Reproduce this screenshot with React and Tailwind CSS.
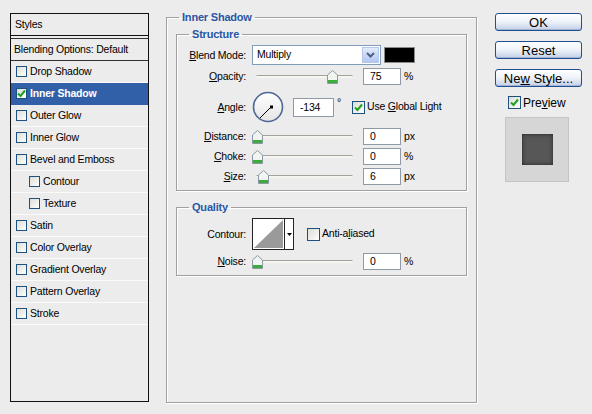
import React from 'react';

const font = { fontFamily: '"Liberation Sans", Arial, sans-serif' };

/* ── XP-style checkbox ── */
function Check({ checked, small }) {
    return (
        <span
            className={
                (small ? 'w-[11px] h-[11px] ' : 'w-[13px] h-[13px] ') +
                'inline-flex shrink-0 items-center justify-center border border-[#1c5180] bg-gradient-to-br from-[#dcdcd7] to-white'
            }
        >
            {checked && (
                <svg width="9" height="9" viewBox="0 0 9 9">
                    <path d="M1 4.5 L3.5 7 L8 1.5" fill="none" stroke="#21a121" strokeWidth="2" />
                </svg>
            )}
        </span>
    );
}

function Thumb() {
    return (
        <svg width="11" height="14" viewBox="0 0 11 14">
            <path d="M5.5 0.5 L10.5 5 V13.5 H0.5 V5 Z" fill="#f2f4f2" stroke="#8a98a4" />
            <rect x="1" y="10" width="9" height="3" fill="#3cad3c" />
        </svg>
    );
}

function Slider({ value }) {
    return (
        <div className="relative w-[97px] h-[14px]">
            <div className="absolute left-0 right-0 top-[6px] h-[3px] rounded-full border-t border-[#a4a49c] bg-[#f6f6f0]" />
            <div className="absolute top-[1px]" style={{ left: value - 4 }}>
                <Thumb />
            </div>
        </div>
    );
}

function Field({ value, wide }) {
    return (
        <div
            className={
                (wide ? 'w-[41px] h-[19px] ' : 'w-[38px] h-[17px] ') +
                'flex items-center bg-white border border-[#8e9aa6] pl-[6px] text-[10.5px] leading-none'
            }
        >
            {value}
        </div>
    );
}

function Label({ children }) {
    return <div className="w-[69px] shrink-0 text-right text-[10.5px] leading-none">{children}</div>;
}

function SliderRow({ label, value, unit }) {
    return (
        <div className="flex h-[20px] items-center">
            <Label>{label}</Label>
            <div className="ml-[10px]">
                <Slider value={value} />
            </div>
            <div className="ml-[10px]">
                <Field value={value} />
            </div>
            <span className="ml-[3px] text-[10.5px] leading-none">{unit}</span>
        </div>
    );
}

const styleRows = [
    { name: 'Drop Shadow' },
    { name: 'Inner Shadow', on: true },
    { name: 'Outer Glow' },
    { name: 'Inner Glow' },
    { name: 'Bevel and Emboss' },
    { name: 'Contour', sub: true },
    { name: 'Texture', sub: true },
    { name: 'Satin' },
    { name: 'Color Overlay' },
    { name: 'Gradient Overlay' },
    { name: 'Pattern Overlay' },
    { name: 'Stroke' },
];

function XpButton({ children }) {
    return (
        <button
            type="button"
            className="w-[87px] h-[18px] rounded-[3px] border border-[#1f4f8f] bg-gradient-to-b from-white via-[#eef2f9] to-[#c3cfe7] text-[13px] tracking-normal leading-none text-black shadow-[inset_0_-1px_0_#a4b4d6]"
        >
            {children}
        </button>
    );
}

export default function App() {
    return (
        <div className="w-[592px] h-[414px] bg-[#ececec] text-black tracking-[-0.2px] flex items-start pl-[10px] pt-[10px] overflow-hidden" style={font}>
            {/* ── Lista de estilos ── */}
            <div className="mt-[3px] w-[139px] h-[389px] border border-[#111] flex flex-col text-[10.5px]">
                <div className="h-[22px] shrink-0 border-b border-[#111] flex items-center pl-[4px]">Styles</div>
                <div className="h-[2px] shrink-0" />
                <div className="h-[23px] shrink-0 border-y border-[#333] flex items-center pl-[3px]">
                    Blending Options: Default
                </div>
                {styleRows.map((r) => (
                    <div
                        key={r.name}
                        className={
                            'h-[22px] shrink-0 border-b flex items-center gap-[3px] ' +
                            (r.sub ? 'pl-[18px] ' : 'pl-[5px] ') +
                            (r.on ? 'bg-[#3160a9] border-[#3160a9] text-white font-bold' : 'border-[#fafafa]')
                        }
                    >
                        <Check small checked={r.on} />
                        <span>{r.name}</span>
                    </div>
                ))}
            </div>

            {/* ── Panel central ── */}
            <fieldset className="ml-[17px] w-[311px] h-[393px] border border-[#a0a0a0] shadow-[inset_1px_1px_0_#fff,1px_1px_0_#fff] px-[9px]">
                <legend className="ml-[3px] px-[3px] text-[11px] leading-[14px] font-bold text-[#2a55a5]">Inner Shadow</legend>

                <fieldset className="mt-[3px] border border-[#a0a0a0] shadow-[inset_1px_1px_0_#fff,1px_1px_0_#fff] pt-[4px] pb-[4px]">
                    <legend className="ml-[12px] px-[3px] text-[11px] leading-[14px] font-bold text-[#2a55a5]">Structure</legend>

                    <div className="flex h-[20px] items-center">
                        <Label>
                            <u>B</u>lend Mode:
                        </Label>
                        <div className="ml-[6px] flex w-[129px] h-[20px] border border-[#7f9db9] bg-white">
                            <div className="flex-1 flex items-center pl-[4px] text-[10.5px]">Multiply</div>
                            <div className="w-[17px] m-[1px] flex items-center justify-center border border-[#b4c6ea] bg-gradient-to-b from-[#e3ebfb] to-[#b3c6f0]">
                                <svg width="9" height="6" viewBox="0 0 9 6">
                                    <path d="M1 1 L4.5 4.5 L8 1" fill="none" stroke="#4d6185" strokeWidth="2" />
                                </svg>
                            </div>
                        </div>
                        <div className="ml-[3px] w-[31px] h-[16px] bg-black border border-[#8a8a8a]" />
                    </div>

                    <div className="mt-[1px]">
                        <SliderRow label={<><u>O</u>pacity:</>} value={75} unit="%" />
                    </div>

                    <div className="mt-[5px] flex h-[32px] items-center">
                        <Label>
                            <u>A</u>ngle:
                        </Label>
                        <svg className="ml-[6px]" width="32" height="32" viewBox="0 0 32 32">
                            <defs>
                                <linearGradient id="dial" x1="0" y1="0" x2="0" y2="1">
                                    <stop offset="0" stopColor="#ffffff" />
                                    <stop offset="1" stopColor="#e4e4e4" />
                                </linearGradient>
                            </defs>
                            <circle cx="16" cy="16" r="14.5" fill="url(#dial)" stroke="#4f6795" strokeWidth="1.6" />
                            <line x1="19" y1="16" x2="8" y2="27" stroke="#000" strokeWidth="1" />
                            <rect x="18" y="14.5" width="3" height="3" fill="#000" />
                        </svg>
                        <div className="ml-[9px]">
                            <Field value="-134" wide />
                        </div>
                        <span className="ml-[3px] self-start mt-[6px] text-[10.5px] leading-none">°</span>
                        <div className="ml-[11px] flex items-center gap-[2px] text-[10.5px]">
                            <Check checked />
                            <span>
                                Use <u>G</u>lobal Light
                            </span>
                        </div>
                    </div>

                    <div className="mt-[3px]">
                        <SliderRow label={<><u>D</u>istance:</>} value={0} unit="px" />
                    </div>
                    <SliderRow label={<><u>C</u>hoke:</>} value={0} unit="%" />
                    <SliderRow label={<><u>S</u>ize:</>} value={6} unit="px" />
                </fieldset>

                <fieldset className="mt-[9px] border border-[#a0a0a0] shadow-[inset_1px_1px_0_#fff,1px_1px_0_#fff] pt-[4px] pb-[4px]">
                    <legend className="ml-[12px] px-[3px] text-[11px] leading-[14px] font-bold text-[#2a55a5]">Quality</legend>

                    <div className="flex h-[32px] items-center">
                        <Label>Contour:</Label>
                        <div className="ml-[6px] flex w-[42px] h-[32px] border border-[#222] bg-white">
                            <svg width="31" height="30" viewBox="0 0 31 30">
                                <path d="M1 29 L30 1 V29 Z" fill="#9a9a9a" />
                            </svg>
                            <div className="flex-1 border-l border-[#222] flex items-center justify-center">
                                <svg width="5" height="3" viewBox="0 0 5 3">
                                    <path d="M0 0 H5 L2.5 3 Z" fill="#000" />
                                </svg>
                            </div>
                        </div>
                        <div className="ml-[13px] flex items-center gap-[2px] text-[10.5px]">
                            <Check />
                            <span>
                                Anti-a<u>l</u>iased
                            </span>
                        </div>
                    </div>

                    <div className="mt-[1px]">
                        <SliderRow label={<><u>N</u>oise:</>} value={0} unit="%" />
                    </div>
                </fieldset>
            </fieldset>

            {/* ── Botones ── */}
            <div className="ml-[18px] mt-[3px] flex flex-col items-start w-[87px]">
                <div className="flex flex-col gap-[10px]">
                    <XpButton>OK</XpButton>
                    <XpButton>Reset</XpButton>
                    <XpButton>
                        Ne<u>w</u> Style...
                    </XpButton>
                </div>
                <div className="ml-[13px] mt-[9px] flex items-center gap-[2px] text-[12px] tracking-normal leading-none">
                    <Check checked />
                    <span>
                        Pre<u>v</u>iew
                    </span>
                </div>
                <div className="ml-[10px] mt-[8px] w-[64px] h-[65px] bg-[#d6d6d6] border border-[#c4c4c4] flex items-center justify-center">
                    <div className="w-[31px] h-[31px] bg-[#575757] shadow-[inset_0_0_4px_#222]" />
                </div>
            </div>
        </div>
    );
}
